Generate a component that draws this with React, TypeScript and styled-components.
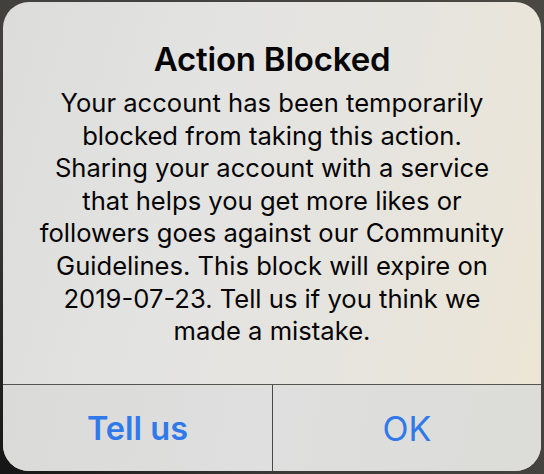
import styled, { createGlobalStyle } from "styled-components";

const GlobalStyle = createGlobalStyle`
  html, body {
    margin: 0;
    padding: 0;
    background: #3b3a37;
  }
  body {
    font-family: Inter, "Noto Sans", "Liberation Sans", sans-serif;
  }
`;

const Backdrop = styled.div`
  width: 544px;
  height: 474px;
  box-sizing: border-box;
  padding: 2px 3px 3px 3px;
  background: radial-gradient(circle at 0% 100%, #151515 0%, #3c3b38 40%, #4a4843 100%);
`;

const Alert = styled.div`
  height: 100%;
  display: flex;
  flex-direction: column;
  border-radius: 26px;
  overflow: hidden;
  background: linear-gradient(105deg, #dcdcda 0%, #e3e3e2 35%, #e6e4de 65%, #ede6d5 100%);
`;

const Content = styled.div`
  flex: 1;
  display: flex;
  flex-direction: column;
  align-items: center;
  padding: 39px 20px 0;
  text-align: center;
  color: #050505;
`;

const Title = styled.h1`
  margin: -1px 0 9px;
  font-size: 33px;
  font-weight: 600;
  line-height: 38px;
  letter-spacing: -0.2px;
  white-space: nowrap;
`;

const Message = styled.p`
  margin: 0;
  font-size: 25.6px;
  line-height: 32.6px;
  font-weight: 400;
  white-space: nowrap;
`;

const Buttons = styled.div`
  height: 86px;
  display: grid;
  grid-template-columns: 269px 1fr;
  border-top: 1px solid #55544f;
  background: linear-gradient(100deg, #dadad9 0%, #dedfde 50%, #dcdcd8 100%);
`;

const Button = styled.button<{ $bold?: boolean }>`
  border: none;
  background: transparent;
  font-family: inherit;
  font-size: ${({ $bold }) => ($bold ? "32.5px" : "34px")};
  font-weight: ${({ $bold }) => ($bold ? 600 : 400)};
  color: #2f79ea;
  padding: 1px 0 0;
  & + & {
    border-left: 1px solid #4a4a46;
  }
`;

export default function App() {
  return (
    <>
      <GlobalStyle />
      <Backdrop>
        <Alert>
          <Content>
            <Title>Action Blocked</Title>
            <Message>
              Your account has been temporarily
              <br />
              blocked from taking this action.
              <br />
              Sharing your account with a service
              <br />
              that helps you get more likes or
              <br />
              followers goes against our Community
              <br />
              Guidelines. This block will expire on
              <br />
              2019-07-23. Tell us if you think we
              <br />
              made a mistake.
            </Message>
          </Content>
          <Buttons>
            <Button $bold>Tell us</Button>
            <Button>OK</Button>
          </Buttons>
        </Alert>
      </Backdrop>
    </>
  );
}
